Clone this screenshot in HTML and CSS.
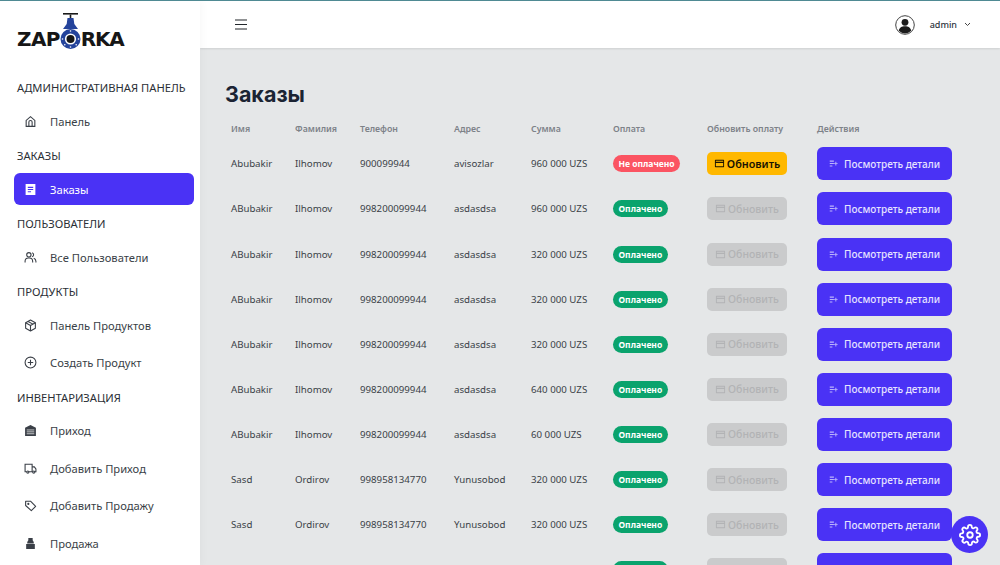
FILE: index.html
```html
<!DOCTYPE html>
<html lang="ru">
<head>
<meta charset="utf-8">
<title>Заказы</title>
<link rel="stylesheet" href="styles.css">
</head>
<body>
<svg class="sprite" width="0" height="0" aria-hidden="true">
  <symbol id="i-card" viewBox="0 0 24 24"><path d="M3 4h18a1 1 0 0 1 1 1v14a1 1 0 0 1-1 1H3a1 1 0 0 1-1-1V5a1 1 0 0 1 1-1zm1 7v7h16v-7H4zm0-5v2h16V6H4z" fill="currentColor"/></symbol>
  <symbol id="i-detail" viewBox="0 0 24 24"><path d="M2 4h11v3H2zM2 10.5h11v3H2zM2 17h7v3H2zM17 11V7.500h2.500V11H23v2.500h-3.500V17H17v-3.500h-3.500V11z" fill="currentColor"/></symbol>
</svg>
<div class="app">
  <aside class="sidebar">
    <div class="logo">
      <span class="logo-text">ZAP</span>
      <svg class="valve" width="21" height="37" viewBox="0 0 21 37">
        <rect x="3" y="0" width="15" height="1.600" fill="#1a1a1a"/>
        <rect x="9.700" y="1.600" width="1.600" height="4" fill="#1a1a1a"/>
        <path d="M7.500 5h6l.8 6 3.700 5H3l3.700-5z" fill="#24439b"/>
        <circle cx="10.500" cy="26" r="10" fill="#24439b"/>
        <circle cx="10.500" cy="26" r="5.600" fill="#fff"/>
        <circle cx="10.500" cy="26" r="4" fill="#161616"/>
        <circle cx="10.500" cy="18" r=".8" fill="#fff"/><circle cx="10.500" cy="34" r=".8" fill="#fff"/>
        <circle cx="2.500" cy="26" r=".8" fill="#fff"/><circle cx="18.500" cy="26" r=".8" fill="#fff"/>
        <circle cx="4.800" cy="31.700" r=".8" fill="#fff"/><circle cx="16.200" cy="31.700" r=".8" fill="#fff"/>
      </svg>
      <span class="logo-text logo-tight">RKA</span>
    </div>
    <nav class="nav">
      <section class="nav-group">
        <h3 class="nav-title">АДМИНИСТРАТИВНАЯ ПАНЕЛЬ</h3>
        <a class="nav-item"><svg class="nav-icon" viewBox="0 0 24 24" fill="none" stroke="currentColor" stroke-width="2"><path d="M4 21V10l8-7 8 7v11z"/><path d="M9 21v-8a3 3 0 0 1 6 0v8"/></svg>Панель</a>
      </section>
      <section class="nav-group">
        <h3 class="nav-title">ЗАКАЗЫ</h3>
        <a class="nav-item active"><svg class="nav-icon" viewBox="0 0 24 24"><path d="M3 2h18v20H3z M7 7v2h10V7z M7 11v2h10v-2z M7 15v2h6v-2z" fill="currentColor" fill-rule="evenodd"/></svg>Заказы</a>
      </section>
      <section class="nav-group">
        <h3 class="nav-title">ПОЛЬЗОВАТЕЛИ</h3>
        <a class="nav-item"><svg class="nav-icon" viewBox="0 0 24 24" fill="none" stroke="currentColor" stroke-width="2"><circle cx="9" cy="7" r="4"/><path d="M2 21v-2a6 6 0 0 1 6-6h2a6 6 0 0 1 6 6v2"/><path d="M15 3.200a4 4 0 0 1 0 7.600M18 13.500a6 6 0 0 1 4 5.500v2"/></svg>Все Пользователи</a>
      </section>
      <section class="nav-group">
        <h3 class="nav-title">ПРОДУКТЫ</h3>
        <a class="nav-item"><svg class="nav-icon" viewBox="0 0 24 24" fill="none" stroke="currentColor" stroke-width="2" stroke-linejoin="round"><path d="M12 2l9 5v10l-9 5-9-5V7z"/><path d="M3 7l9 5 9-5M12 12v10M7.500 4.500l9 5"/></svg>Панель Продуктов</a>
        <a class="nav-item"><svg class="nav-icon" viewBox="0 0 24 24" fill="none" stroke="currentColor" stroke-width="2"><circle cx="12" cy="12" r="10"/><path d="M12 7v10M7 12h10"/></svg>Создать Продукт</a>
      </section>
      <section class="nav-group">
        <h3 class="nav-title">ИНВЕНТАРИЗАЦИЯ</h3>
        <a class="nav-item"><svg class="nav-icon" viewBox="0 0 24 24"><path d="M12 2l10 5v15H2V7z" fill="currentColor"/><path d="M5 11h14M5 14.500h14M5 18h14" stroke="#fff" stroke-width="1.300"/></svg>Приход</a>
        <a class="nav-item"><svg class="nav-icon" viewBox="0 0 24 24" fill="none" stroke="currentColor" stroke-width="2"><path d="M5 18H2V4h13v14H9"/><path d="M15 9h4l3 4v5h-2M15 18h1"/><circle cx="7" cy="18.500" r="2"/><circle cx="18" cy="18.500" r="2"/></svg>Добавить Приход</a>
        <a class="nav-item"><svg class="nav-icon" viewBox="0 0 24 24" fill="none" stroke="currentColor" stroke-width="2" stroke-linejoin="round"><path d="M3 4h9l9.500 9.500-8 8L3 12z"/><circle cx="8" cy="9" r="1"/></svg>Добавить Продажу</a>
        <a class="nav-item"><svg class="nav-icon" viewBox="0 0 24 24"><path d="M8 2h8v4l2 3v3H6V9l2-3zM4 13h16v9H4z" fill="currentColor"/></svg>Продажа</a>
      </section>
    </nav>
  </aside>

  <div class="content">
    <header class="topbar">
      <svg class="burger" width="12" height="11" viewBox="0 0 12 11" stroke="#22262b" stroke-width="1.100"><path d="M0 1h12M0 5.500h12M0 10h12"/></svg>
      <div class="account">
        <svg class="avatar" width="20" height="20" viewBox="0 0 20 20"><circle cx="10" cy="10" r="9.300" fill="#fff" stroke="#444" stroke-width="1"/><circle cx="10" cy="7.300" r="3.400" fill="#1c1c1c"/><path d="M3.800 15.800c.5-3.300 3-4.500 6.200-4.500s5.700 1.200 6.200 4.500A9 9 0 0 1 10 18.500a9 9 0 0 1-6.200-2.700z" fill="#1c1c1c"/></svg>
        <span class="account-name">admin</span>
        <svg width="7" height="5" viewBox="0 0 7 5" fill="none" stroke="#444" stroke-width="1"><path d="M1 1l2.500 2.500L6 1"/></svg>
      </div>
    </header>
    <main class="page">
      <h1 class="page-title">Заказы</h1>
      <table class="orders">
        <thead>
          <tr><th class="c1">Имя</th><th class="c2">Фамилия</th><th class="c3">Телефон</th><th class="c4">Адрес</th><th class="c5">Сумма</th><th class="c6">Оплата</th><th class="c7">Обновить оплату</th><th class="c8">Действия</th></tr>
        </thead>
        <tbody>
          <tr><td>Abubakir</td><td>Ilhomov</td><td>900099944</td><td>avisozlar</td><td>960 000 UZS</td><td><span class="badge unpaid">Не оплачено</span></td><td><span class="update ready"><svg class="btn-icon"><use href="#i-card"/></svg>Обновить</span></td><td><span class="details"><svg class="btn-icon small"><use href="#i-detail"/></svg>Посмотреть детали</span></td></tr>
          <tr><td>ABubakir</td><td>Ilhomov</td><td>998200099944</td><td>asdasdsa</td><td>960 000 UZS</td><td><span class="badge paid">Оплачено</span></td><td><span class="update"><svg class="btn-icon"><use href="#i-card"/></svg>Обновить</span></td><td><span class="details"><svg class="btn-icon small"><use href="#i-detail"/></svg>Посмотреть детали</span></td></tr>
          <tr><td>ABubakir</td><td>Ilhomov</td><td>998200099944</td><td>asdasdsa</td><td>320 000 UZS</td><td><span class="badge paid">Оплачено</span></td><td><span class="update"><svg class="btn-icon"><use href="#i-card"/></svg>Обновить</span></td><td><span class="details"><svg class="btn-icon small"><use href="#i-detail"/></svg>Посмотреть детали</span></td></tr>
          <tr><td>ABubakir</td><td>Ilhomov</td><td>998200099944</td><td>asdasdsa</td><td>320 000 UZS</td><td><span class="badge paid">Оплачено</span></td><td><span class="update"><svg class="btn-icon"><use href="#i-card"/></svg>Обновить</span></td><td><span class="details"><svg class="btn-icon small"><use href="#i-detail"/></svg>Посмотреть детали</span></td></tr>
          <tr><td>ABubakir</td><td>Ilhomov</td><td>998200099944</td><td>asdasdsa</td><td>320 000 UZS</td><td><span class="badge paid">Оплачено</span></td><td><span class="update"><svg class="btn-icon"><use href="#i-card"/></svg>Обновить</span></td><td><span class="details"><svg class="btn-icon small"><use href="#i-detail"/></svg>Посмотреть детали</span></td></tr>
          <tr><td>ABubakir</td><td>Ilhomov</td><td>998200099944</td><td>asdasdsa</td><td>640 000 UZS</td><td><span class="badge paid">Оплачено</span></td><td><span class="update"><svg class="btn-icon"><use href="#i-card"/></svg>Обновить</span></td><td><span class="details"><svg class="btn-icon small"><use href="#i-detail"/></svg>Посмотреть детали</span></td></tr>
          <tr><td>ABubakir</td><td>Ilhomov</td><td>998200099944</td><td>asdasdsa</td><td>60 000 UZS</td><td><span class="badge paid">Оплачено</span></td><td><span class="update"><svg class="btn-icon"><use href="#i-card"/></svg>Обновить</span></td><td><span class="details"><svg class="btn-icon small"><use href="#i-detail"/></svg>Посмотреть детали</span></td></tr>
          <tr><td>Sasd</td><td>Ordirov</td><td>998958134770</td><td>Yunusobod</td><td>320 000 UZS</td><td><span class="badge paid">Оплачено</span></td><td><span class="update"><svg class="btn-icon"><use href="#i-card"/></svg>Обновить</span></td><td><span class="details"><svg class="btn-icon small"><use href="#i-detail"/></svg>Посмотреть детали</span></td></tr>
          <tr><td>Sasd</td><td>Ordirov</td><td>998958134770</td><td>Yunusobod</td><td>320 000 UZS</td><td><span class="badge paid">Оплачено</span></td><td><span class="update"><svg class="btn-icon"><use href="#i-card"/></svg>Обновить</span></td><td><span class="details"><svg class="btn-icon small"><use href="#i-detail"/></svg>Посмотреть детали</span></td></tr>
          <tr><td>Sasd</td><td>Ordirov</td><td>998958134770</td><td>Yunusobod</td><td>320 000 UZS</td><td><span class="badge paid">Оплачено</span></td><td><span class="update"><svg class="btn-icon"><use href="#i-card"/></svg>Обновить</span></td><td><span class="details"><svg class="btn-icon small"><use href="#i-detail"/></svg>Посмотреть детали</span></td></tr>
        </tbody>
      </table>
    </main>
  </div>
</div>
<button class="fab" aria-label="Настройки">
  <svg width="22" height="22" viewBox="0 0 24 24" fill="none" stroke="#fff" stroke-width="2" stroke-linejoin="round"><circle cx="12" cy="12" r="3"/><path d="M19.400 15a1.650 1.650 0 0 0 .33 1.820l.06.06a2 2 0 1 1-2.830 2.830l-.06-.06a1.650 1.650 0 0 0-2.820 1.170V21a2 2 0 1 1-4 0v-.09A1.650 1.650 0 0 0 7.260 19.800l-.06.06a2 2 0 1 1-2.830-2.830l.06-.06A1.650 1.650 0 0 0 3.260 14.150H3a2 2 0 1 1 0-4h.09A1.650 1.650 0 0 0 4.200 7.330l-.06-.06a2 2 0 1 1 2.830-2.830l.06.06a1.650 1.650 0 0 0 2.820-1.170V3a2 2 0 1 1 4 0v.09a1.650 1.650 0 0 0 2.820 1.170l.06-.06a2 2 0 1 1 2.830 2.830l-.06.06a1.650 1.650 0 0 0 1.170 2.820H21a2 2 0 1 1 0 4h-.09a1.650 1.650 0 0 0-1.510 1z"/></svg>
</button>
</body>
</html>
```

FILE: styles.css
```css
* { box-sizing: border-box; }
html, body { height: 100%; }
body {
  margin: 0;
  overflow: hidden;
  border-top: 1px solid #4f8a93;
  background: #e5e7e8;
  font-family: "Noto Sans", "Open Sans", sans-serif;
  color: #2f3640;
}
.sprite { position: absolute; }
.app { display: flex; height: 564px; overflow: hidden; }

.sidebar {
  width: 200px;
  flex: none;
  background: #fff;
  box-shadow: 2px 0 8px rgba(0, 0, 0, .03);
  position: relative;
  z-index: 1;
}
.logo {
  height: 77px;
  padding: 12px 0 0 17px;
  display: flex;
  align-items: flex-start;
}
.logo-text {
  font-family: "DejaVu Sans", sans-serif;
  font-weight: 700;
  font-size: 20px;
  line-height: 24px;
  margin-top: 14px;
  color: #161616;
  letter-spacing: -.6px;
}
.logo-tight { letter-spacing: -1.2px; }
.valve { flex: none; }
.nav { display: flex; flex-direction: column; gap: 9px; }
.nav-group { display: flex; flex-direction: column; gap: 5.5px; }
.nav-title {
  margin: 0 0 2.5px 17px;
  font-size: 11.2px;
  line-height: 19px;
  font-weight: 400;
  white-space: nowrap;
  color: #2b2f36;
}
.nav-item {
  display: flex;
  align-items: center;
  gap: 13px;
  height: 32px;
  margin: 0 6px 0 14px;
  padding-left: 10px;
  border-radius: 6px;
  font-size: 11.2px;
  color: #3a3f47;
}
.nav-item.active { background: #4a32f5; color: #fff; }
.nav-icon { width: 13px; height: 13px; flex: none; }

.content { flex: 1; min-width: 0; display: flex; flex-direction: column; }
.topbar {
  height: 47px;
  flex: none;
  background: #fff;
  box-shadow: 0 1px 2px rgba(0, 0, 0, .1);
  display: flex;
  align-items: center;
  justify-content: space-between;
  padding: 0 29px 0 35px;
  position: relative;
}
.account { display: flex; align-items: center; }
.avatar { margin-right: 15px; }
.account-name { font-size: 9px; font-weight: 500; color: #2f3640; margin-right: 7px; }

.page { padding: 31px 0 0 25px; }
.page-title {
  margin: 0 0 8.3px;
  font-family: Inter, sans-serif;
  font-size: 21.5px;
  line-height: 30px;
  font-weight: 700;
  color: #1b2433;
}
.orders { border-collapse: collapse; table-layout: fixed; width: 740px; }
.orders th {
  height: 24px;
  padding: 0 0 0 6px;
  text-align: left;
  font-size: 8.8px;
  font-weight: 600;
  color: #7d8288;
}
.orders td {
  height: 45.100px;
  padding: 0 0 0 6px;
  font-size: 9.7px;
  color: #3a3f47;
  white-space: nowrap;
}
.c1 { width: 64px; }
.c2 { width: 65px; }
.c3 { width: 94px; }
.c4 { width: 77px; }
.c5 { width: 82px; }
.c6 { width: 94px; }
.c7 { width: 110px; }
.c8 { width: 154px; }

.badge {
  display: inline-flex;
  align-items: center;
  height: 17px;
  padding: 0 5.5px;
  border-radius: 9px;
  font-size: 8.5px;
  font-weight: 700;
  color: #fff;
  vertical-align: middle;
}
.unpaid { background: #fb5462; }
.paid { background: #0aa36d; }
.update {
  display: inline-flex;
  align-items: center;
  justify-content: center;
  gap: 2px;
  width: 80px;
  height: 23px;
  border-radius: 5px;
  font-size: 10.5px;
  font-weight: 500;
  background: #cacbcc;
  color: #b2b3b5;
  vertical-align: middle;
}
.update.ready { background: #ffb800; color: #191300; font-size: 10.8px; font-weight: 600; }
.btn-icon { width: 11px; height: 11px; flex: none; }
.btn-icon.small { width: 9px; height: 9px; opacity: .75; }
.details {
  display: inline-flex;
  align-items: center;
  gap: 6px;
  width: 135px;
  height: 33px;
  padding-left: 12px;
  border-radius: 6px;
  font-size: 10px;
  font-weight: 500;
  background: #4a32f5;
  color: #e6e3ff;
  vertical-align: middle;
}
.fab {
  position: fixed;
  left: 951px;
  top: 516px;
  width: 37px;
  height: 37px;
  padding: 0;
  border: 0;
  border-radius: 50%;
  background: #4a32f5;
  display: flex;
  align-items: center;
  justify-content: center;
}
```
